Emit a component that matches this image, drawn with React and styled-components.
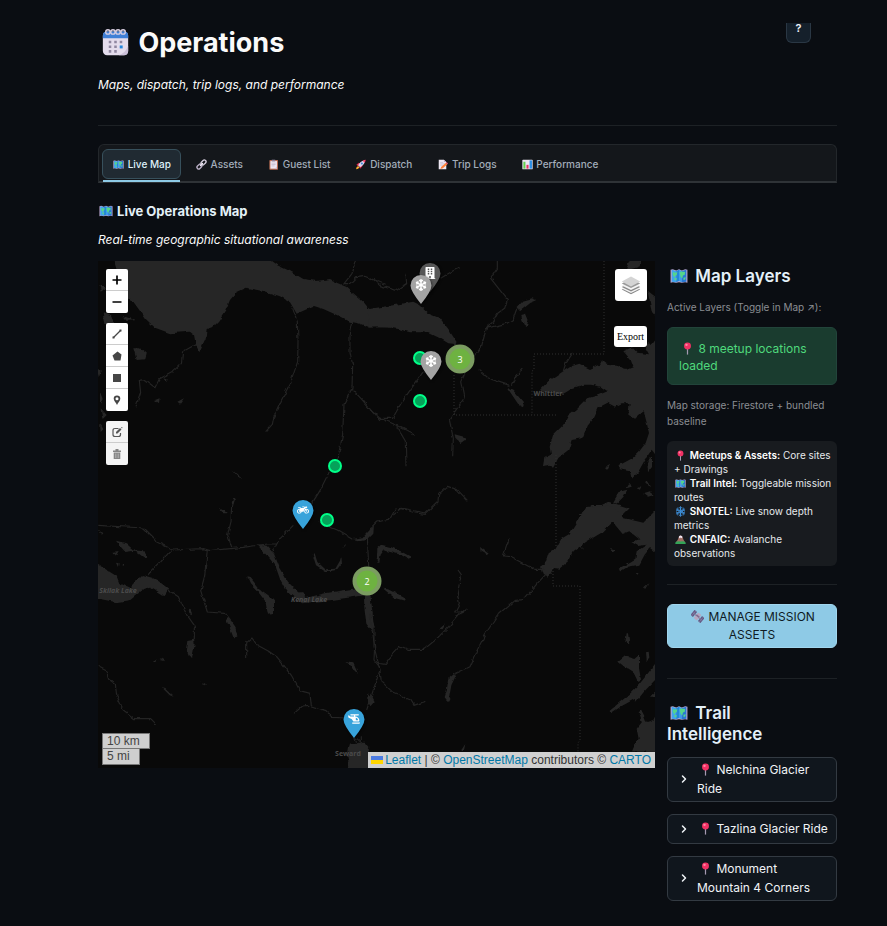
import React from "react";
import styled, { createGlobalStyle } from "styled-components";
import { FaBuilding, FaSnowflake, FaMotorcycle, FaHelicopter } from "react-icons/fa";
import { ChevronRight } from "lucide-react";

const GlobalStyle = createGlobalStyle`
  *, *::before, *::after { box-sizing: border-box; }
  body {
    margin: 0;
    background: #0a0d12;
    color: #fafafa;
    font-family: Inter, "Noto Sans", sans-serif;
    font-size: 12px;
  }
  button { font: inherit; cursor: pointer; }
  h1, h2, h3, p { margin: 0; }
`;

/* ---------- emoji drawings ---------- */

const EmojiBox = styled.span`
  display: inline-flex;
  justify-content: center;
  width: ${(p) => p.$box}px;
  vertical-align: ${(p) => (p.$size > 20 ? -4 : p.$size > 14 ? -3 : -2)}px;
  svg { display: block; width: ${(p) => p.$size}px; height: ${(p) => p.$size}px; }
`;

const drawings = {
  calendar: (
    <>
      <rect x="1" y="3" width="30" height="28" rx="5" fill="#e4dcec" />
      <path d="M1 11V8q0-5 5-5h20q5 0 5 5v3z" fill="#3f7fd6" />
      <path d="M31 20v6q0 5-5 5h-6q8-3 11-11z" fill="#cbbfd8" />
      <g fill="none" stroke="#d9cfe2" strokeWidth="1.6">
        <circle cx="7" cy="3.500" r="2.600" /><circle cx="13" cy="3.500" r="2.600" />
        <circle cx="19" cy="3.500" r="2.600" /><circle cx="25" cy="3.500" r="2.600" />
      </g>
      <g fill="#9087a0">
        <path d="M8 14h3v3H8zM14.500 14h3v3h-3zM21 14h3v3h-3zM8 19.500h3v3H8zM14.500 19.500h3v3h-3zM8 25h3v3H8zM14.500 25h3v3h-3z" />
      </g>
      <path d="M21 19.500h3.500v3.500H21z" fill="#2687dc" />
    </>
  ),
  map: (
    <>
      <path d="M1 5l4-1 6 2 5-2 5 2 6-2 4 1v23l-4-1-6 1-5-1-5 1-6-1-4 1z" fill="#b9a6cf" />
      <path d="M3 5l8 2v20l-8-1z" fill="#3fa4ee" />
      <path d="M11 7l5-2v20l-5 2z" fill="#2287d8" />
      <path d="M16 5l5 2v20l-5-2z" fill="#3a9dec" />
      <path d="M21 7l8-2v21l-8 1z" fill="#2878d4" />
      <path d="M5 9l5 1 3-1-1 5-3 2-1 3-3-5zM8 19l4 1-1 4-3-1zM17 9l4-1 6 1-1 5-3 1-1 5-3-2-1-4zM24 19l4-1-1 4-3 1z" fill="#55d58b" />
    </>
  ),
  link: (
    <g fill="none" strokeLinecap="round" strokeWidth="4">
      <rect x="14" y="5" width="16" height="10" rx="5" transform="rotate(-45 22 10)" stroke="#d5cddd" />
      <rect x="2" y="17" width="16" height="10" rx="5" transform="rotate(-45 10 22)" stroke="#bcb1c8" />
      <path d="M13 19l6-6" stroke="#eee9f3" />
    </g>
  ),
  clipboard: (
    <>
      <rect x="4" y="3" width="25" height="28" rx="2" fill="#bd7056" />
      <path d="M7 6h19v22H7z" fill="#eee8f3" />
      <path d="M20 28l6-6v6z" fill="#c8b9d8" />
      <path d="M11 2h10v5H11z" fill="#8c8299" />
      <path d="M10 12h12M10 16h12M10 20h9" stroke="#b3a9bf" strokeWidth="1.600" />
    </>
  ),
  rocket: (
    <>
      <path d="M3 30q0-8 6-10l4 4q-3 6-10 6z" fill="#ffb02e" />
      <path d="M4 17l7-6 6 3-8 7zM15 28l7-8-2-5-8 8z" fill="#e3264c" />
      <path d="M9 18Q15 6 27 4l2 2q-2 12-14 18z" fill="#dcd2e8" />
      <path d="M22 5q5-3 9-3 0 4-3 9z" fill="#f8416a" />
      <circle cx="20" cy="13" r="3" fill="#3989df" />
    </>
  ),
  memo: (
    <>
      <path d="M5 2h15l7 7v21H5z" fill="#eee8f3" />
      <path d="M20 2l7 7h-7z" fill="#bba9cd" />
      <path d="M9 10h9M9 14h14M9 18h10" stroke="#b7adc4" strokeWidth="1.600" />
      <path d="M12 23L26 11l4 4-13 12-7 2z" fill="#ff823b" />
      <path d="M26 11l2-2 4 4-2 2z" fill="#f04f88" />
    </>
  ),
  chart: (
    <>
      <rect x="1" y="2" width="30" height="28" rx="2" fill="#ece5f2" />
      <path d="M4 8h6v20H4z" fill="#63cf50" />
      <path d="M13 17h6v11h-6z" fill="#e52f64" />
      <path d="M22 4h7v24h-7z" fill="#2d8fe5" />
    </>
  ),
  pin: (
    <>
      <path d="M14.500 17h3v14h-3z" fill="#a59ab2" />
      <circle cx="16" cy="10" r="8.500" fill="#f23165" />
      <circle cx="13.500" cy="7" r="3" fill="#ff86a2" />
    </>
  ),
  snowflake: (
    <g stroke="#3f93e0" strokeWidth="2.600" strokeLinecap="round" fill="none">
      <path d="M16 2v28M4 9l24 14M4 23L28 9" />
      <path d="M12 4l4 4 4-4M12 28l4-4 4 4M4 14l5-2-1-6M28 18l-5 2 1 6M4 18l5 2-1 6M28 14l-5-2 1-6" />
      <circle cx="16" cy="16" r="5" />
    </g>
  ),
  mountain: (
    <>
      <path d="M2 25Q8 21 11 9q1-4 5-5 4 1 6 5 3 12 8 16z" fill="#9c6d63" />
      <path d="M11 9q1-4 5-5 4 1 6 5l-3 3-3-2-3 3z" fill="#f1e9f5" />
      <path d="M1 25q6-5 15-3 9-3 15 3v4H1z" fill="#33a457" />
    </>
  ),
  satellite: (
    <g transform="rotate(40 16 16)">
      <rect x="0" y="8" width="8" height="16" fill="#635b83" />
      <rect x="24" y="8" width="8" height="16" fill="#635b83" />
      <path d="M4 8v16M28 8v16M0 16h8M24 16h8" stroke="#a094c2" />
      <path d="M8 15h16v3H8z" fill="#8c8298" />
      <rect x="11" y="7" width="10" height="18" rx="2" fill="#b6a9c2" />
      <path d="M11 13h10v4H11z" fill="#826e91" />
    </g>
  ),
};

const Emoji = ({ name, size = 13, box = 16 }) => (
  <EmojiBox $size={size} $box={box} aria-hidden="true">
    <svg viewBox="0 0 32 32">{drawings[name]}</svg>
  </EmojiBox>
);

/* ---------- page ---------- */

const Page = styled.main`
  padding: 23px 50px 24px 98px;
`;

const Header = styled.header`
  display: flex;
  justify-content: space-between;
  align-items: flex-start;
  padding-bottom: 31px;
  border-bottom: 1px solid #1d2125;
`;

const Title = styled.h1`
  font-size: 27px;
  line-height: 40px;
  font-weight: 700;
`;

const Lead = styled.p`
  margin-top: ${(p) => p.$top}px;
  font-size: 12px;
  line-height: 18px;
  font-style: italic;
`;

const HelpButton = styled.button`
  width: 25px;
  height: 20px;
  margin-right: 26px;
  padding: 0 0 10px;
  border: 1px solid #2a3744;
  border-top: 0;
  border-radius: 0 0 6px 6px;
  background: #15202b;
  color: #eef2f6;
  font-size: 11px;
  line-height: 10px;
  font-weight: 600;
`;

const Tabs = styled.div`
  display: flex;
  gap: 4px;
  height: 39px;
  margin-top: 18px;
  padding: 4px 3px 0;
  border: 1px solid #23272b;
  border-bottom: 2px solid #2f3337;
  border-radius: 6px 6px 0 0;
  background: #14171b;
`;

const Tab = styled.button`
  position: relative;
  height: 30px;
  padding: 0 9px;
  border: 1px solid ${(p) => (p.$active ? "#37505c" : "transparent")};
  border-radius: 6px;
  background: ${(p) => (p.$active ? "#202a32" : "transparent")};
  color: ${(p) => (p.$active ? "#dff1fa" : "#a3adba")};
  font-size: 10px;
  line-height: 16px;
  font-weight: 500;
  white-space: nowrap;
  &::after {
    content: "";
    display: ${(p) => (p.$active ? "block" : "none")};
    position: absolute;
    left: 0;
    right: 0;
    bottom: -4px;
    height: 2px;
    background: #8ecae6;
  }
`;

const SectionTitle = styled.h2`
  margin-top: 18px;
  color: #e3f0f8;
  font-size: 13px;
  line-height: 20px;
  font-weight: 700;
`;

const Columns = styled.div`
  display: grid;
  grid-template-columns: minmax(0, 1fr) 170px;
  align-items: start;
  gap: 12px;
  margin-top: 12px;
`;

/* ---------- map ---------- */

const MapFrame = styled.section`
  position: relative;
  overflow: hidden;
  aspect-ratio: 557 / 507;
  background: #090909;
  font-family: "Liberation Sans", Arial, sans-serif;
`;

const Terrain = styled.svg`
  display: block;
  width: 100%;
  height: 100%;
`;

const MapPlace = styled.span`
  position: absolute;
  left: calc(100% * ${(p) => p.$x} / 557);
  top: calc(100% * ${(p) => p.$y} / 507);
  transform: translate(-50%, ${(p) => (p.$tip ? "-100%" : "-50%")});
  display: flex;
`;

const PlaceLabel = styled.span`
  color: #4b4b4b;
  font: ${(p) => (p.$water ? "italic" : "normal")} 700 7px/10px "Open Sans", sans-serif;
  white-space: nowrap;
`;

const Dot = styled.span`
  width: 14px;
  height: 14px;
  border: 2px solid #00ff88;
  border-radius: 50%;
  background: #05a25a;
`;

const Cluster = styled.span`
  width: 29px;
  height: 29px;
  border: 4px solid #7b9c61;
  border-radius: 50%;
  background: #6eb241;
  color: #fff;
  font: 9px/21px "Open Sans", sans-serif;
  text-align: center;
`;

const PinBody = styled.span`
  position: relative;
  width: 22px;
  height: 29px;
  color: #fff;
  filter: drop-shadow(1px 1px 1px #0008);
  > svg:first-child { display: block; width: 22px; height: 29px; fill: ${(p) => p.$color}; }
  > svg:last-child { position: absolute; left: 5px; top: 4px; width: 12px; height: 12px; }
`;

const Controls = styled.div`
  position: absolute;
  top: 8px;
  ${(p) => p.$side}: 8px;
  display: flex;
  flex-direction: column;
  align-items: flex-end;
  gap: ${(p) => p.$gap}px;
`;

const ToolGroup = styled.div`
  display: flex;
  flex-direction: column;
  width: 22px;
  border-radius: 2px;
  overflow: hidden;
`;

const Tool = styled.button`
  display: flex;
  align-items: center;
  justify-content: center;
  height: 22px;
  padding: 0;
  border: 0;
  border-bottom: 1px solid #ccc;
  background: ${(p) => (p.disabled ? "#f4f4f4" : "#fff")};
  color: #464646;
  &:last-child { border-bottom: 0; }
  svg { width: 12px; height: 12px; }
`;

const LayersButton = styled.button`
  display: flex;
  align-items: center;
  justify-content: center;
  width: 32px;
  height: 32px;
  padding: 0;
  border: 0;
  border-radius: 3px;
  background: #fff;
  svg { width: 20px; height: 20px; }
`;

const ExportButton = styled.button`
  width: 33px;
  height: 21px;
  padding: 0;
  border: 0;
  border-radius: 3px;
  background: #fff;
  color: #000;
  font: 10px/20px "Liberation Serif", serif;
`;

const Scale = styled.div`
  position: absolute;
  left: 4px;
  bottom: 3px;
  color: #444;
  font-size: 12px;
`;

const ScaleLine = styled.div`
  width: ${(p) => p.$w}px;
  height: 16px;
  padding-left: 4px;
  border: 1px solid #777;
  border-top-width: ${(p) => (p.$top ? 0 : 1)}px;
  background: #cfcfcf;
  line-height: 15px;
`;

const Attribution = styled.div`
  position: absolute;
  right: 0;
  bottom: 0;
  padding: 0 4px 0 3px;
  background: #d0d0d0;
  color: #333;
  font-size: 12px;
  line-height: 16px;
  white-space: nowrap;
  a { color: #0078a8; text-decoration: none; }
  svg { width: 12px; height: 8px; margin-right: 2px; }
`;

const Pin = ({ x, y, color, icon: Icon, label }) => (
  <MapPlace $x={x} $y={y} $tip role="img" aria-label={label}>
    <PinBody $color={color}>
      <svg viewBox="0 0 22 29"><path d="M11 0a10.500 10.500 0 0 1 10.500 10.500Q21.500 16 11 29 .5 16 .5 10.500A10.500 10.500 0 0 1 11 0z" /></svg>
      <Icon />
    </PinBody>
  </MapPlace>
);

const MapDrawing = () => (
  <Terrain viewBox="0 0 557 507" preserveAspectRatio="xMidYMid slice" aria-hidden="true">
    <defs>
      <filter id="coast" x="0" y="0" width="100%" height="100%" colorInterpolationFilters="sRGB">
        <feTurbulence type="fractalNoise" baseFrequency=".16" numOctaves="2" seed="4" />
        <feDisplacementMap in="SourceGraphic" scale="4" xChannelSelector="R" yChannelSelector="G" />
      </filter>
    </defs>
    <rect width="557" height="507" fill="#090909" />
    <g filter="url(#coast)">
      <rect width="557" height="507" fill="#090909" />
      <g fill="#262626">
        <g transform="translate(-8 -6) scale(.33333)">
          <path d="M68 5H525L560 30 600 48 640 72 680 78 720 72 745 84 765 92 790 115 820 140 838 163 900 155V218L835 215 805 205 780 200 745 182 700 162 672 153 620 176 600 142 570 124 520 108 470 98 440 112 420 135 405 170 385 200 370 215 350 222 347 250 335 275 328 292 318 270 312 240 300 230 240 235 195 218 165 190 150 168 130 140 105 125z" />
          <path d="M28 90l20 10-16 10zM38 175l25 8 10 22-30 2zM98 183l38 12-26 3zM130 280l20 0 20 15-5 18-25 2zM195 435l14-5-2 15zM262 440l20-10-12 16zM220 370l10 3-3 8zM22 335l10 12-6 20zM30 410l8 22-8 14zM32 460l18 20-12 12zM30 505l10 18-8 8zM424 643l34 30-14-8zM430 728l6 2-6 20-6-2zM386 758l28 17h-14z" />
        </g>
        <g transform="translate(272 -6) scale(.33333)">
          <path d="M-5 162L60 152 130 140 150 150 180 178 210 190 235 222 264 268 235 265 210 250 185 238 160 232 120 232 85 222 50 216-5 218z" />
          <path d="M436 160l20-22 30-8 15 6-20 8-30 24zM454 180l14-4 8 20-6 20-10-8zM410 396l18 8 34 40-3 10-15-8zM254 538l30 8 2 8-14 10-16-12zM780 15h34l-12 22-20 6-6 20-14-6zM833 110l25 20v55l-12-14z" />
          <path d="M860 250l-15 20-8-10-10 20 10 18-35-5-16-16-26 12 22 25 8 22-22 9-24-15-34-4-14-10-6 12-30 14-32-16-24 8-24 15-45 30-20 20-6 10 70 8 30-18 30-10h24l30 6 20 14-30 12-34 10-30 30-24 20-16 30-30 30-10 34 4 24-20 10-4 24 22-4 8 10 16-30 30-24 10-30 34-6 14-40 16-20 14-30 30-16 22 12 20-10h24l-4 34 20 12 26-22 8 30 8 35-10 30-20 26-20 20-38 20 0 10 30 6 6 26 20-22 20-36 20-30 14 18 16-40z" />
          <path d="M625 780l40-30 30 0 20-10 34 10 30 10-20 20zM730 740l18-30 24-6-12 22-20 20zM770 700l8-14 4 10zM800 700l14-6-4 10zM820 715l20-6 14 10-20 6zM700 640l20-14-8 18zM832 620l14-14v30l-12 16zM828 685l6-6 10 14z" />
        </g>
        <g transform="translate(-8 249) scale(.33333)">
          <path d="M10 155l30 18 40 26 8 20 30 14 22-22 16-16 30 8 16 8 16 12 18 14-12 18-12-4-30-18-28 10-34 28-40 6-50-10H10zM78 92l30 8 20 18 26 2 18 20-8 4-30-22-28 4-14-16zM22 62l18 8-4 4zM68 126l18-3-8 14zM78 158l8 2-2 12zM92 160l12 2-4 6zM500 103l30 4 22 24 16 40 26 44 24 26 12 10-8 8-20-4-14-14-18-34-14-40-16-20zM600 250l40-4 6 18 60-14 110-18 10 24-100 14-90 10z" />
          <path d="M822 255l18 0 8 60 5 40-10 4-14-18-6-50zM790 87l30-6 20-22 12-14-2 26-18 18-20 4zM668 134l6-4 8 26 24 22 30-2 14-24 4-14 2 24-14 18-36 4-28-18zM758 112l8-8-6 12zM472 202l10 2 26 32 30 22 14 16v38l-18 2-8-40-26-34-20-20zM408 324l8-2 20 28 6 30-12 2zM292 390l20-4 2 20-8 40-8-4-10-24zM296 298l6-2 4 20-8-4zM188 456l16-10-8 10zM208 450l10-4 8 8zM215 532l8 2 28 26-12-4zM330 514l18 10-4 2zM766 456l24 4 8 18 6 14-10-10-10-14zM832 584l12-30 10 20-12 14z" />
          <path d="M776 700l14 4 14-6 24 0 10 12-4 30 14 40h-76l6-26-6-30zM394 0h10l12 12z" />
        </g>
        <g transform="translate(272 249) scale(.33333)">
          <path d="M650-10h80l30 34 60 14 40-40V130l-20-16-16 20-16 30-34 6-20 12-8-6 30-18 20-12 4-22 30-20-26 4-20-12 24-8-30-24-20 8-30-36-30 30-50 30-40 30-16 30-24 20-16-2-6 16-14 14-14-10-8-24 16-10 10-30 20-12 18-32 24-14z" />
          <path d="M20 154l2-40 12-10 30 8 28 12 30 16-6 8-24-14-40-10-10-4-10 14-4 22zM330 108l26 20-6 4-18-10zM40 236l14 2 54 28-4 6-30-8zM262 318l30-24-8 14zM208 356l20-16-10 18zM236 500l14-12 8 8-14 30-6 34 4 8-10 4-8-10 6-20zM274 720l12-18-4 18zM626 108l10 6 4 6zM0 50h10L0 80zM0 250l8 60-8 40zM-5 550l14 20-14 14zM0 730l16 30-16 5z" />
          <path d="M745 455l20-16 28 8 14-12v40l6 34-10 4-12-24-24-16zM828 424l8-2 2 24-8 8zM770 370h4l4 30-12-4zM860 455l-30 40-24 30-30 30-34 28-26 22 8 4 30-20 40-22 4 8 24-30 38-40zM860 610l-10 20-20 6-8-20-10-20-6 10 10 30-16 20 6 30-12 20-8 18 70 2 6-34 2-50zM720 114l14 4-6 8zM800 190l10-4-4 8zM818 236l18-16-10 16zM840 560l20-20v20z" />
        </g>
      </g>
      <g fill="none" stroke="#242424" strokeWidth="3.500" strokeLinejoin="round">
        <g transform="translate(-8 -6) scale(.33333)">
          <path d="M318 268l-40 22-4 36-26 24-40 22-14 28-34-26-12 2 4 38-14 40M608 160l14 40 2 60-1 60-20 60-28 54-24 54-4 20-20 22M798 10l-12 46-24 30 20 0 18-18 24-4 60 24M788 200l-8 40 0 50 8 40-2 70-24 48-4 90-14 72M788 404l28 30 54 64M718 650l-30 60-30 48" />
        </g>
        <g transform="translate(272 -6) scale(.33333)">
          <path d="M0 68l30 24 50 14 30-20-2-30M212 70l36-22 22-10M382 10v30l-20 30 50 64-8 26-20 14-16 28-18 14-16 60-24 30M345 220l66-15 18-12 12-34M300 320l-28 60 10 50-44 64 12 56-2 54M326 344l32 28 60 20M424 392l12-24 22-28M580 348l8-26 18-28M0 464l28 24 50 22 54 28M80 514l26 44 2 76M70 780l26-20 70 14 38-36 2-20 26-24 30 10 30 32M160 350l-64 90-28 50H24" />
        </g>
        <g transform="translate(-8 249) scale(.33333)">
          <path d="M22 46l140 8 30 30 8 12 50 24 90-4 20 6 100-10 70-10 30 0M172 196l40-40 30-34M425-15l-2 50-10 40 12 36M548 126l20-38 42-42M682 36l60 24 48 28M352 118l-8 80-12 44 20 64 54 4 16 20M235 240l30 20 24 52 24 34v42M22 466l24 12 10 30 20 14 4 34 20 44 34 26 48 0 18 18M470 444v-46l16-14 14 20 36 20 24 16 20 24 24 32 26 46 30 8 4 38 44 14 18 20 44 2M612 610l26-22 20-2M832 80l4 90M852 350v60l18 70-20 60-20 60M800 700l-6-20 20 18 0-16" />
        </g>
        <g transform="translate(272 249) scale(.33333)">
          <path d="M0 56l20-20 40-10 16-28M96-5l40 14 30 4 14-14M418 84l-18 54 22 2 70 38h30M530 190l-28 30-40 48-30 4-46 40-40 60-26 52-20 46-50 24M264 180l10 14-12 56 6 30-14 26 20 0M270 310l-34 40-40 40-34 28-48 0-24-10-20 22-24 30-28-4M0 310l14 100-2 40 16 20 6 44 38 36 50 20 10 16 34-12" />
        </g>
      </g>
    </g>
    <path d="M506 0V93H436V109L434 110V154M356 114V154H458M458 194V286M455 307V325H482V479L480 482V507" fill="none" stroke="#303030" strokeDasharray="1 2" />
  </Terrain>
);

const Tools = () => (
  <Controls $side="left" $gap={10}>
    <ToolGroup>
      <Tool aria-label="Zoom in"><svg viewBox="0 0 12 12"><path d="M6 1.500v9M1.500 6h9" stroke="#000" strokeWidth="1.700" /></svg></Tool>
      <Tool aria-label="Zoom out"><svg viewBox="0 0 12 12"><path d="M1.500 6h9" stroke="#000" strokeWidth="1.700" /></svg></Tool>
    </ToolGroup>
    <ToolGroup>
      <Tool aria-label="Draw a polyline"><svg viewBox="0 0 12 12"><path d="M2.500 9.500l7-7" stroke="#464646" strokeWidth="1.200" /><path d="M1.500 8.500h2v2h-2zM8.500 1.500h2v2h-2z" fill="#464646" /></svg></Tool>
      <Tool aria-label="Draw a polygon"><svg viewBox="0 0 12 12"><path d="M6.500 1.500l4 3-1 6H3.500l-2-5z" fill="#464646" /></svg></Tool>
      <Tool aria-label="Draw a rectangle"><svg viewBox="0 0 12 12"><path d="M2 2h8v8H2z" fill="#464646" /></svg></Tool>
      <Tool aria-label="Draw a marker"><svg viewBox="0 0 12 12"><path fillRule="evenodd" d="M6 1.500a3.300 3.300 0 0 1 3.300 3.300C9.300 7 7 8.500 6 11 5 8.500 2.700 7 2.700 4.800A3.300 3.300 0 0 1 6 1.500zm0 1.700a1.500 1.500 0 1 0 0 3 1.500 1.500 0 0 0 0-3z" fill="#464646" /></svg></Tool>
    </ToolGroup>
    <ToolGroup>
      <Tool disabled aria-label="Edit layers"><svg viewBox="0 0 12 12"><path d="M7.500 2.500H4q-2 0-2 2v4q0 2 2 2h3.500q2 0 2-2V7" fill="none" stroke="#555" strokeWidth="1.200" /><path d="M5 7.500V6l4-4 1.500 1.500-4 4zM10 1.500l1-.5.5.5-.5 1z" fill="#555" /></svg></Tool>
      <Tool disabled aria-label="Delete layers"><svg viewBox="0 0 12 12"><path d="M2 2.500h8V4H2zM4.500 1h3v1.500h-3zM2.700 4.500h6.600V11H2.700z" fill="#858585" /><path d="M4.500 5.500v4.500M6 5.500v4.500M7.500 5.500v4.500" stroke="#bbb" strokeWidth=".6" /></svg></Tool>
    </ToolGroup>
  </Controls>
);

const dots = [[322, 97], [322, 140], [237, 205], [229, 259]];

const OperationsMap = () => (
  <MapFrame aria-label="Live operations map">
    <MapDrawing />
    <MapPlace $x={450} $y={133}><PlaceLabel>Whittier</PlaceLabel></MapPlace>
    <MapPlace $x={20} $y={330}><PlaceLabel $water>Skilak Lake</PlaceLabel></MapPlace>
    <MapPlace $x={211} $y={339}><PlaceLabel $water>Kenai Lake</PlaceLabel></MapPlace>
    <MapPlace $x={250} $y={493}><PlaceLabel>Seward</PlaceLabel></MapPlace>
    {dots.map(([x, y]) => (
      <MapPlace key={`${x}-${y}`} $x={x} $y={y}><Dot /></MapPlace>
    ))}
    <Pin x={332} y={31} color="#575757" icon={FaBuilding} label="Building" />
    <Pin x={323} y={43} color="#a3a3a3" icon={FaSnowflake} label="Snow station" />
    <Pin x={333} y={119} color="#a3a3a3" icon={FaSnowflake} label="Snow station" />
    <Pin x={205} y={268} color="#38a3db" icon={FaMotorcycle} label="Trailhead" />
    <Pin x={256} y={477} color="#38a3db" icon={FaHelicopter} label="Heliport" />
    <MapPlace $x={362} $y={98}><Cluster>3</Cluster></MapPlace>
    <MapPlace $x={269} $y={320}><Cluster>2</Cluster></MapPlace>
    <Tools />
    <Controls $side="right" $gap={25}>
      <LayersButton aria-label="Layers">
        <svg viewBox="0 0 26 26">
          <path d="M1 19l12-6 12 6-12 6z" fill="#888" />
          <path d="M1 17.500l12-6 12 6-12 6z" fill="#f4f4f4" />
          <path d="M1 15.500l12-6 12 6-12 6z" fill="#888" />
          <path d="M1 13.500l12-6 12 6-12 6z" fill="#f4f4f4" />
          <path d="M1 11l12-6 12 6-12 6z" fill="#999" />
          <path d="M1 8.500l12-6.500 12 6.500-12 6.500z" fill="#d4d4d4" />
        </svg>
      </LayersButton>
      <ExportButton>Export</ExportButton>
    </Controls>
    <Scale>
      <ScaleLine $w={48}>10 km</ScaleLine>
      <ScaleLine $w={38} $top>5 mi</ScaleLine>
    </Scale>
    <Attribution>
      <a href="#leaflet"><svg viewBox="0 0 12 8" aria-hidden="true"><path d="M0 0h12v4H0z" fill="#4c7be1" /><path d="M0 4h12v4H0z" fill="#ffd500" /></svg>Leaflet</a>
      {" | © "}<a href="#osm">OpenStreetMap</a>{" contributors © "}<a href="#carto">CARTO</a>
    </Attribution>
  </MapFrame>
);

/* ---------- sidebar ---------- */

const Side = styled.aside`
  display: flex;
  flex-direction: column;
`;

const SideTitle = styled.h2`
  padding: ${(p) => p.$top}px 12px 0 0;
  color: #e3f0f8;
  font-size: 17px;
  line-height: 21px;
  font-weight: 600;
`;

const Caption = styled.p`
  margin-top: 12px;
  color: #8b8e92;
  font-size: 10px;
  line-height: 16px;
`;

const Success = styled.div`
  margin-top: 12px;
  padding: 12px 11px 10px;
  border: 1px solid #22443a;
  border-radius: 6px;
  background: #1a3c2f;
  color: #4fd97c;
  font-size: 12px;
  line-height: 17px;
`;

const Legend = styled.ul`
  margin: 12px 0 0;
  padding: 7px 3px 6px 7px;
  border-radius: 6px;
  background: #181b1f;
  color: #e6e9ec;
  font-size: 10px;
  line-height: 14px;
  list-style: none;
  strong { color: #fff; font-weight: 600; }
`;

const Divider = styled.hr`
  width: 100%;
  height: 1px;
  margin: ${(p) => p.$top}px 0 0;
  border: 0;
  background: #1d2125;
`;

const PrimaryButton = styled.button`
  margin-top: 19px;
  padding: 3px 12px;
  border: 1px solid #a1d6ee;
  border-radius: 6px;
  background: #8ecae6;
  color: #0f1b24;
  font-size: 12px;
  line-height: 18px;
`;

const Expander = styled.button`
  display: flex;
  align-items: center;
  gap: 7px;
  min-height: 30px;
  margin-top: 12px;
  padding: 2px 8px 3px 10px;
  border: 1px solid #333a42;
  border-radius: 6px;
  background: #10161d;
  color: #f0f3f6;
  font-size: 12px;
  line-height: 19px;
  text-align: left;
  > svg { flex: none; width: 12px; height: 12px; stroke-width: 3; }
`;

const tabs = [
  ["map", "Live Map"], ["link", "Assets"], ["clipboard", "Guest List"],
  ["rocket", "Dispatch"], ["memo", "Trip Logs"], ["chart", "Performance"],
];

const legend = [
  ["pin", "Meetups & Assets", "Core sites + Drawings"],
  ["map", "Trail Intel", "Toggleable mission routes"],
  ["snowflake", "SNOTEL", "Live snow depth metrics"],
  ["mountain", "CNFAIC", "Avalanche observations"],
];

const trails = ["Nelchina Glacier Ride", "Tazlina Glacier Ride", "Monument Mountain 4 Corners"];

export default function App() {
  return (
    <>
      <GlobalStyle />
      <Page>
        <Header>
          <div>
            <Title><Emoji name="calendar" size={27} box={34} /> Operations</Title>
            <Lead $top={13}>Maps, dispatch, trip logs, and performance</Lead>
          </div>
          <HelpButton aria-label="Help">?</HelpButton>
        </Header>
        <Tabs role="tablist">
          {tabs.map(([icon, text], i) => (
            <Tab key={text} role="tab" aria-selected={i === 0} $active={i === 0}>
              <Emoji name={icon} size={11} box={13} /> {text}
            </Tab>
          ))}
        </Tabs>
        <SectionTitle><Emoji name="map" size={14} /> Live Operations Map</SectionTitle>
        <Lead $top={10}>Real-time geographic situational awareness</Lead>
        <Columns>
          <OperationsMap />
          <Side>
            <SideTitle $top={5}><Emoji name="map" size={18} box={24} /> Map Layers</SideTitle>
            <Caption>Active Layers (Toggle in Map ↗):</Caption>
            <Success><Emoji name="pin" /> 8 meetup locations loaded</Success>
            <Caption>Map storage: Firestore + bundled baseline</Caption>
            <Legend>
              {legend.map(([icon, name, text]) => (
                <li key={name}><Emoji name={icon} size={11} box={13} /> <strong>{name}:</strong> {text}</li>
              ))}
            </Legend>
            <Divider $top={18} />
            <PrimaryButton><Emoji name="satellite" /> MANAGE MISSION ASSETS</PrimaryButton>
            <Divider $top={30} />
            <SideTitle $top={24}><Emoji name="map" size={18} box={24} /> Trail Intelligence</SideTitle>
            {trails.map((name) => (
              <Expander key={name} aria-expanded="false">
                <ChevronRight aria-hidden="true" />
                <span><Emoji name="pin" /> {name}</span>
              </Expander>
            ))}
          </Side>
        </Columns>
      </Page>
    </>
  );
}
